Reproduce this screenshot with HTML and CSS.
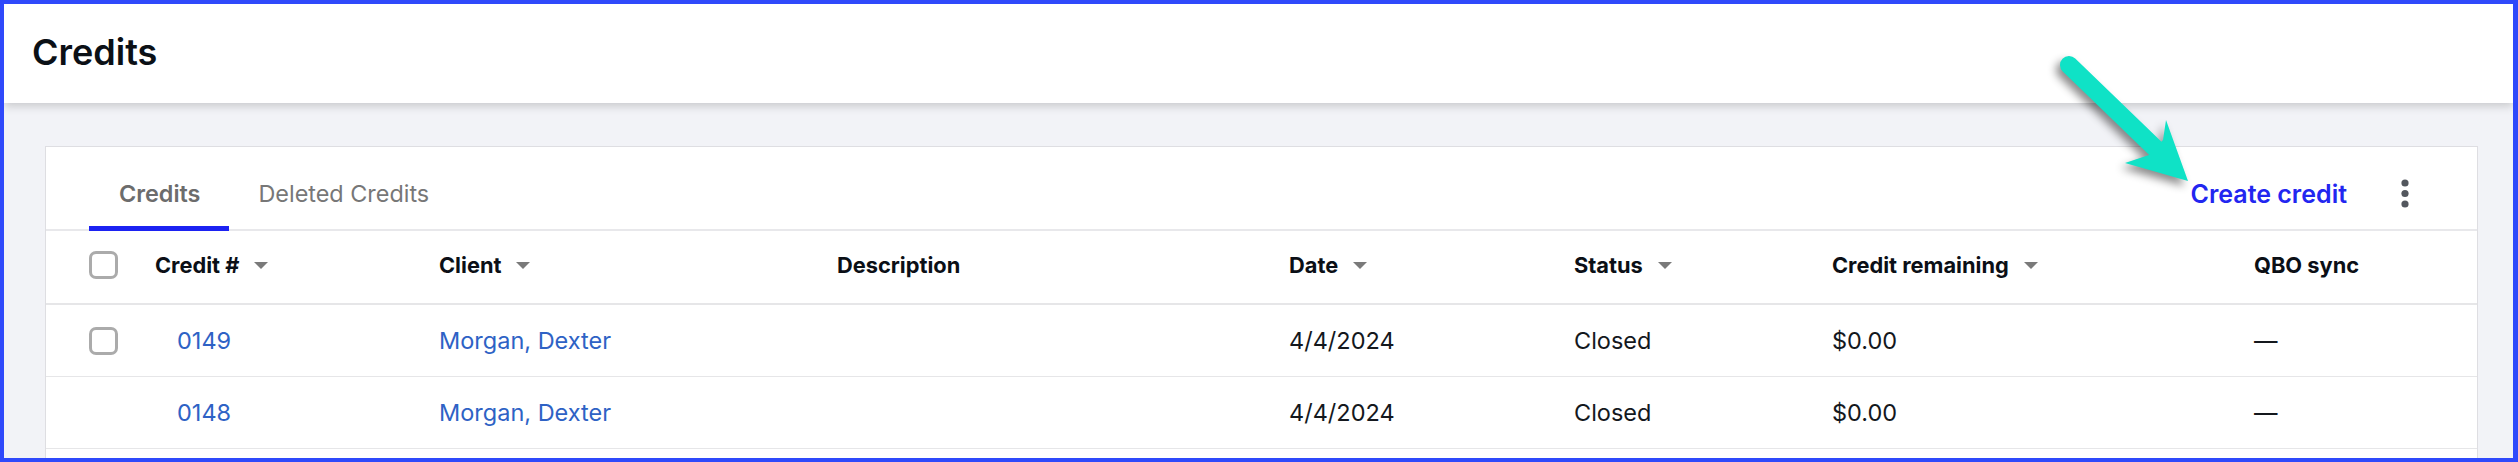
FILE: index.html
```html
<!DOCTYPE html>
<html lang="en">
<head>
<meta charset="utf-8">
<title>Credits</title>
<link rel="stylesheet" href="styles.css">
</head>
<body>
<div class="frame">
  <header class="topbar">
    <h1 class="title">Credits</h1>
  </header>
  <main class="content">
    <section class="card">
      <div class="tabbar">
        <div class="tab active">Credits</div>
        <div class="tab">Deleted Credits</div>
        <div class="actions">
          <a class="create" href="#">Create credit</a>
          <span class="more" aria-label="More">
            <svg width="8" height="30" viewBox="0 0 8 30"><circle cx="4" cy="4" r="3.6"/><circle cx="4" cy="14.5" r="3.6"/><circle cx="4" cy="25" r="3.6"/></svg>
          </span>
        </div>
      </div>
      <div class="row head">
        <div class="cell"><span class="check"></span></div>
        <div class="cell">Credit #<span class="caret"></span></div>
        <div class="cell">Client<span class="caret"></span></div>
        <div class="cell">Description</div>
        <div class="cell">Date<span class="caret"></span></div>
        <div class="cell">Status<span class="caret"></span></div>
        <div class="cell">Credit remaining<span class="caret"></span></div>
        <div class="cell">QBO sync</div>
      </div>
      <div class="row">
        <div class="cell"><span class="check"></span></div>
        <div class="cell num"><a class="link" href="#">0149</a></div>
        <div class="cell"><a class="link" href="#">Morgan, Dexter</a></div>
        <div class="cell"></div>
        <div class="cell">4/4/2024</div>
        <div class="cell">Closed</div>
        <div class="cell">$0.00</div>
        <div class="cell">—</div>
      </div>
      <div class="row">
        <div class="cell"></div>
        <div class="cell num"><a class="link" href="#">0148</a></div>
        <div class="cell"><a class="link" href="#">Morgan, Dexter</a></div>
        <div class="cell"></div>
        <div class="cell">4/4/2024</div>
        <div class="cell">Closed</div>
        <div class="cell">$0.00</div>
        <div class="cell">—</div>
      </div>
    </section>
  </main>
  <svg class="callout" width="170" height="160" viewBox="2040 40 170 160" aria-hidden="true">
    <g class="arrow">
      <line x1="2069" y1="65" x2="2156" y2="149" stroke-width="18" stroke-linecap="round"/>
      <polygon points="2188,181 2125,163 2149,155 2163,140 2166,120"/>
    </g>
  </svg>
</div>
</body>
</html>
```

FILE: styles.css
```css
html, body {
  margin: 0;
  padding: 0;
}

body {
  font-family: Inter, "Noto Sans", "Liberation Sans", sans-serif;
  color: #0d1117;
}

.frame {
  position: relative;
  box-sizing: border-box;
  width: 2518px;
  height: 462px;
  border: 4px solid #2f49fb;
  border-right-width: 5px;
  background: #f2f3f7;
  overflow: hidden;
}

.topbar {
  position: relative;
  z-index: 1;
  box-sizing: border-box;
  height: 99px;
  background: #ffffff;
  display: flex;
  align-items: center;
  padding: 0 0 3px 28px;
  box-shadow: 0 3px 9px rgba(0, 0, 0, 0.18);
}

.title {
  margin: 0;
  font-size: 36px;
  font-weight: 600;
  color: #0b1016;
  letter-spacing: 0;
}

.content {
  padding: 43px 35px 0 41px;
}

.card {
  background: #ffffff;
  border: 1px solid #dedee2;
  min-height: 400px;
}

.tabbar {
  display: flex;
  height: 82px;
  padding-left: 43px;
  border-bottom: 2px solid #e8e8eb;
}

.tab {
  box-sizing: border-box;
  height: 84px;
  margin-bottom: -2px;
  padding: 33px 30px 0 30px;
  font-size: 23.4px;
  line-height: 28px;
  color: #777777;
  border-bottom: 5px solid transparent;
  white-space: nowrap;
}

.tab.active {
  font-weight: 600;
  color: #6c6c6c;
  border-bottom-color: #1c22f2;
  padding-right: 29px;
}

.tab + .tab {
  padding-left: 29px;
}

.actions {
  margin-left: auto;
  display: flex;
  align-items: center;
  padding: 11px 68px 0 0;
}

.create {
  font-size: 25px;
  font-weight: 600;
  color: #2226f0;
  text-decoration: none;
  margin-right: 54px;
}

.more {
  display: flex;
  fill: #53575e;
}

.row {
  display: grid;
  grid-template-columns: 66px 284px 398px 452px 285px 258px 422px 1fr;
  padding-left: 43px;
  height: 71px;
  border-bottom: 1px solid #e6e6e8;
  font-size: 23.5px;
  color: #14181d;
}

.row.head {
  height: 72px;
  border-bottom: 2px solid #e6e6e8;
  font-size: 21.8px;
  font-weight: 700;
  color: #0b0f16;
}

.cell {
  display: flex;
  align-items: center;
  white-space: nowrap;
}

.row.head .cell {
  padding-bottom: 4px;
}

.cell.num {
  padding-left: 22px;
}

.link {
  color: #2e62c5;
  text-decoration: none;
}

.check {
  box-sizing: border-box;
  width: 29px;
  height: 28px;
  border: 3px solid #ababab;
  border-radius: 7px;
  background: #ffffff;
}

.caret {
  width: 0;
  height: 0;
  margin-left: 15px;
  border-left: 7px solid transparent;
  border-right: 7px solid transparent;
  border-top: 7px solid #7a7a7a;
}

.callout {
  position: absolute;
  left: 2036px;
  top: 36px;
  z-index: 2;
  overflow: visible;
}

.arrow {
  fill: #0fe2c6;
  stroke: #0fe2c6;
  filter: drop-shadow(-4px 5px 4px rgba(0, 0, 0, 0.45));
}

.arrow polygon {
  stroke: none;
}
```
